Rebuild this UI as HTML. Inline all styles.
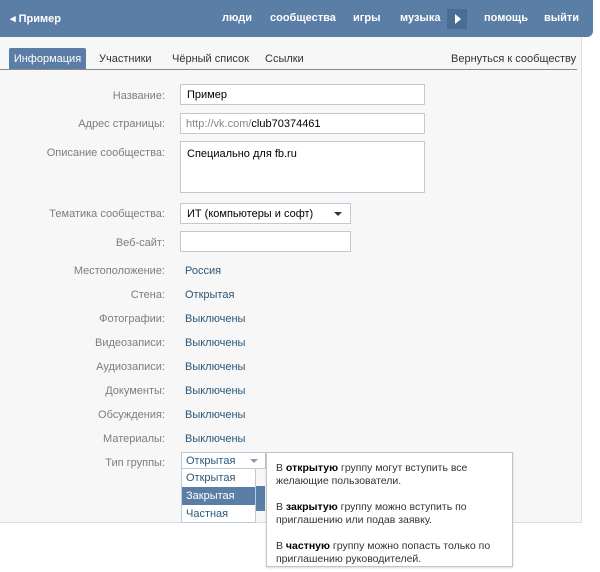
<!DOCTYPE html>
<html><head><meta charset="utf-8"><style>
*{margin:0;padding:0;box-sizing:border-box}
body{width:600px;height:572px;background:#fff;font-family:"Liberation Sans","Noto Sans CJK SC",sans-serif;font-size:11px;color:#000;position:relative;overflow:hidden}
.hdr{position:absolute;left:0;top:0;width:593px;height:37px;background:#5b7ea6;border-bottom-right-radius:6px;color:#fff;font-weight:bold;font-size:11px}
.hdr span{position:absolute;top:12px}
.panel{position:absolute;left:0;top:37px;width:582px;height:486px;background:#f7f7f7;border-right:1px solid #dcdcdc;border-bottom:1px solid #dcdcdc}
.tab{position:absolute;top:48px;height:22px;line-height:22px;font-size:11px;color:#333}
.line{position:absolute;left:0;top:69px;width:577px;height:1px;background:#8a8a8a}
.lbl{position:absolute;right:435px;color:#7d7d7d;font-size:11px;text-align:right;white-space:nowrap}
.val{position:absolute;left:185px;color:#2b587a;font-size:11px}
.inp{position:absolute;left:180px;background:#fff;border:1px solid #c0cad5}
.t{position:absolute;font-size:11px;white-space:nowrap}
</style></head><body>
<div class="hdr">
<span style="left:10px">◂ Пример</span>
<span style="left:222px">люди</span>
<span style="left:270px">сообщества</span>
<span style="left:353px">игры</span>
<span style="left:400px">музыка</span>
<div style="position:absolute;left:447px;top:9px;width:20px;height:20px;background:#4a6d94"><div style="position:absolute;left:8px;top:5px;border-left:6px solid #fff;border-top:5px solid transparent;border-bottom:5px solid transparent"></div></div>
<span style="left:484px">помощь</span>
<span style="left:544px">выйти</span>
</div>
<div class="panel"></div>
<div class="tab" style="left:9px;width:77px;background:#5b7ea6;color:#fff;text-align:center;border-radius:2px 2px 0 0">Информация</div>
<div class="tab" style="left:99px">Участники</div>
<div class="tab" style="left:172px">Чёрный список</div>
<div class="tab" style="left:265px">Ссылки</div>
<div class="tab" style="left:451px">Вернуться к сообществу</div>
<div class="line"></div>

<div class="lbl" style="top:90px">Название:</div>
<div class="inp" style="top:84px;width:245px;height:21px"><span class="t" style="left:6px;top:4px">Пример</span></div>
<div class="lbl" style="top:118px">Адрес страницы:</div>
<div class="inp" style="top:113px;width:245px;height:21px"><span class="t" style="left:5px;top:4px;color:#888">http://vk.com/<span style="color:#000">club70374461</span></span></div>
<div class="lbl" style="top:147px">Описание сообщества:</div>
<div class="inp" style="top:141px;width:245px;height:52px"><span class="t" style="left:6px;top:6px">Специально для fb.ru</span></div>
<div class="lbl" style="top:208px">Тематика сообщества:</div>
<div class="inp" style="top:203px;width:171px;height:21px"><span class="t" style="left:6px;top:4px">ИТ (компьютеры и софт)</span><div style="position:absolute;right:8px;top:8px;border-top:4px solid #333;border-left:4px solid transparent;border-right:4px solid transparent"></div></div>
<div class="lbl" style="top:237px">Веб-сайт:</div>
<div class="inp" style="top:231px;width:171px;height:21px"></div>

<div class="lbl" style="top:265px">Местоположение:</div><div class="val" style="top:265px">Россия</div>
<div class="lbl" style="top:289px">Стена:</div><div class="val" style="top:289px">Открытая</div>
<div class="lbl" style="top:313px">Фотографии:</div><div class="val" style="top:313px">Выключены</div>
<div class="lbl" style="top:337px">Видеозаписи:</div><div class="val" style="top:337px">Выключены</div>
<div class="lbl" style="top:361px">Аудиозаписи:</div><div class="val" style="top:361px">Выключены</div>
<div class="lbl" style="top:385px">Документы:</div><div class="val" style="top:385px">Выключены</div>
<div class="lbl" style="top:409px">Обсуждения:</div><div class="val" style="top:409px">Выключены</div>
<div class="lbl" style="top:433px">Материалы:</div><div class="val" style="top:433px">Выключены</div>
<div class="lbl" style="top:457px">Тип группы:</div>

<div style="position:absolute;left:250px;top:486px;width:15px;height:25px;background:#5b7ea6"></div>
<div style="position:absolute;left:181px;top:452px;width:85px;height:17px;border:1px solid #c0cad5;background:#fff"><span class="t" style="left:4px;top:2px;color:#2b587a">Открытая</span><div style="position:absolute;right:7px;top:6px;border-top:4px solid #8a9bb0;border-left:4px solid transparent;border-right:4px solid transparent"></div></div>
<div style="position:absolute;left:181px;top:468px;width:75px;height:55px;border:1px solid #c0cad5;background:#fff">
<div style="position:absolute;left:0;top:0;width:73px;height:18px;line-height:18px;padding-left:4px;color:#2b587a">Открытая</div>
<div style="position:absolute;left:0;top:18px;width:73px;height:18px;line-height:18px;padding-left:4px;background:#5b7ea6;color:#fff">Закрытая</div>
<div style="position:absolute;left:0;top:36px;width:73px;height:18px;line-height:18px;padding-left:4px;color:#2b587a">Частная</div>
</div>

<div style="position:absolute;left:266px;top:452px;width:247px;height:115px;background:#fff;border:1px solid #c5c5c5;box-shadow:0 1px 2px rgba(0,0,0,.15);font-size:10.5px;line-height:13px;color:#333;padding:9px 0 0 9px">
<div>В <b style="color:#000">открытую</b> группу могут вступить все<br>желающие пользователи.</div>
<div style="margin-top:13px">В <b style="color:#000">закрытую</b> группу можно вступить по<br>приглашению или подав заявку.</div>
<div style="margin-top:13px">В <b style="color:#000">частную</b> группу можно попасть только по<br>приглашению руководителей.</div>
</div>
</body></html>
